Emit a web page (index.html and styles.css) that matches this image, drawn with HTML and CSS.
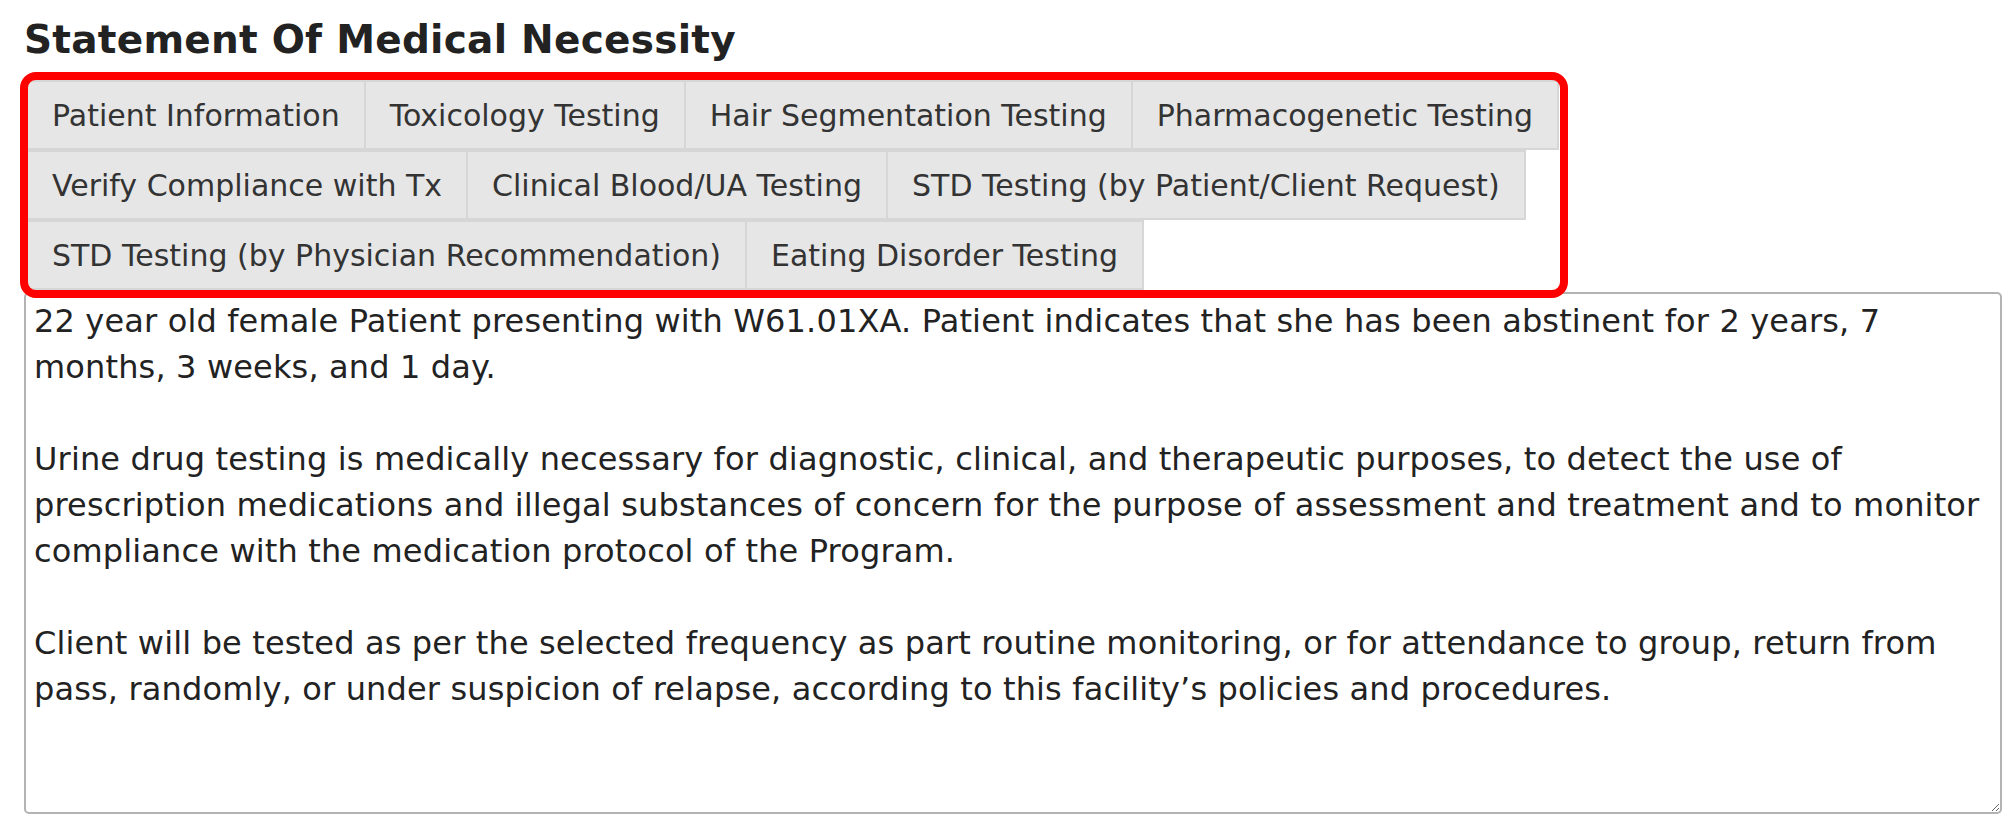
FILE: index.html
```html
<!DOCTYPE html>
<html lang="en">
<head>
  <meta charset="UTF-8" />
  <title>Statement Of Medical Necessity</title>
  <link rel="stylesheet" href="styles.css">
</head>
<body>
  <div class="page">
    <h2 class="title">Statement Of Medical Necessity</h2>

    <ul class="tabs">
      <li class="tab">Patient Information</li>
      <li class="tab">Toxicology Testing</li>
      <li class="tab">Hair Segmentation Testing</li>
      <li class="tab">Pharmacogenetic Testing</li>
      <li class="tab">Verify Compliance with Tx</li>
      <li class="tab">Clinical Blood/UA Testing</li>
      <li class="tab">STD Testing (by Patient/Client Request)</li>
      <li class="tab">STD Testing (by Physician Recommendation)</li>
      <li class="tab">Eating Disorder Testing</li>
    </ul>

    <textarea class="statement">22 year old female Patient presenting with W61.01XA. Patient indicates that she has been abstinent for 2 years, 7 months, 3 weeks, and 1 day.

Urine drug testing is medically necessary for diagnostic, clinical, and therapeutic purposes, to detect the use of prescription medications and illegal substances of concern for the purpose of assessment and treatment and to monitor compliance with the medication protocol of the Program.

Client will be tested as per the selected frequency as part routine monitoring, or for attendance to group, return from pass, randomly, or under suspicion of relapse, according to this facility’s policies and procedures.</textarea>
  </div>
</body>
</html>
```

FILE: styles.css
```css
body {
  margin: 0;
  font-family: "DejaVu Sans", Verdana, sans-serif;
  background-color: #fff;
  color: #222;
}

.page {
  padding: 0 10px 0 24px;
}

.title {
  margin: 17px 0 18px;
  font-size: 39px;
  font-weight: bold;
  letter-spacing: 0.25px;
  color: #222;
}

/* tab strip, highlighted with a red box */
.tabs {
  display: flex;
  flex-wrap: wrap;
  width: 1532px;
  margin: 0 0 0 4px;
  padding: 0;
  list-style: none;
  border-radius: 8px;
  overflow: hidden;
  outline: 8px solid #ff0000;
}

.tab {
  padding: 18px 24px 16px;
  font-size: 30px;
  line-height: 32px;
  color: #333;
  background-color: #e6e6e6;
  border-top: 2px solid #d6d6d6;
  border-right: 2px solid #d6d6d6;
  border-bottom: 2px solid #d6d6d6;
  white-space: nowrap;
}

.statement {
  display: block;
  box-sizing: border-box;
  width: 1978px;
  height: 522px;
  margin-top: 2px;
  padding: 4px 8px;
  font-family: "DejaVu Sans", Verdana, sans-serif;
  font-size: 32px;
  line-height: 46px;
  letter-spacing: 0.15px;
  color: #222;
  border: 2px solid #b3b3b3;
  border-radius: 5px;
}
```
